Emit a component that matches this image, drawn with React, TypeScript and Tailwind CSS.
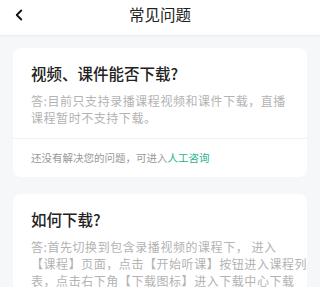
import { ChevronLeft } from 'lucide-react';

const font = { fontFamily: '"Noto Sans CJK SC", "Noto Sans", sans-serif' };

function Card({ title, lines, footer }: { title: string; lines: string[]; footer?: boolean }) {
  return (
    <div className="mx-[13px] rounded-[8px] bg-white">
      <div className="px-[18px] pt-[14px] pb-[12px]">
        <div className="text-[15.5px] leading-[22px] font-medium text-[#222]">{title}</div>
        <div className="mt-[8px] text-[12px] leading-[17px] tracking-[0.55px] text-[#b3b3b3]">
          {lines.map((l) => (
            <div key={l} className="whitespace-nowrap">
              {l}
            </div>
          ))}
        </div>
      </div>
      {footer && (
        <div className="border-t border-[#f2f2f2] px-[18px] py-[12px] text-[10.5px] leading-[14px] text-[#999]">
          还没有解决您的问题，可进入<span className="text-[#1db38b]">人工咨询</span>
        </div>
      )}
    </div>
  );
}

export default function App() {
  return (
    <div className="h-[287px] w-[320px] overflow-hidden bg-[#f6f7f9]" style={font}>
      <header className="relative flex h-[35px] items-center justify-center bg-white shadow-[0_1px_2px_rgba(0,0,0,0.06)]">
        <ChevronLeft className="absolute left-[10px] top-[6px] h-[18px] w-[18px] text-[#111]" strokeWidth={2.4} />
        <div className="-mt-[6px] text-[15.5px] text-[#222]">常见问题</div>
      </header>
      <div className="flex flex-col gap-[17px] pt-[13px]">
        <Card
          title="视频、课件能否下载?"
          lines={['答:目前只支持录播课程视频和课件下载，直播', '课程暂时不支持下载。']}
          footer
        />
        <Card
          title="如何下载?"
          lines={[
            '答:首先切换到包含录播视频的课程下， 进入',
            '【课程】页面，点击【开始听课】按钮进入课程列',
            '表，点击右下角【下载图标】进入下载中心下载',
          ]}
        />
      </div>
    </div>
  );
}
